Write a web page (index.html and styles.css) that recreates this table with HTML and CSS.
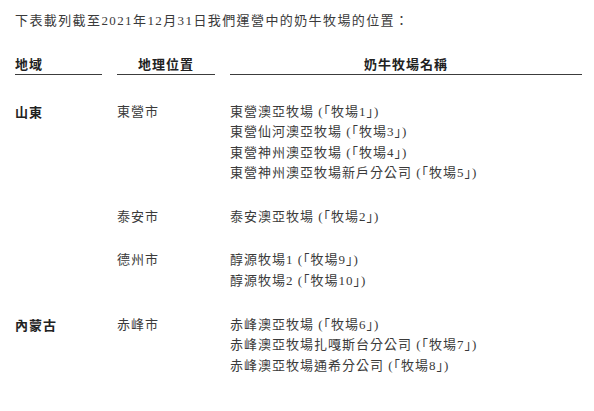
FILE: index.html
```html
<!DOCTYPE html>
<html lang="zh-Hant">
<head>
<meta charset="utf-8">
<link rel="stylesheet" href="styles.css">
</head>
<body>
<p class="intro">下表載列截至2021年12月31日我們運營中的奶牛牧場的位置：</p>
<div class="table">
  <div class="th th-left">地域</div>
  <div class="th th-center">地理位置</div>
  <div class="th th-center">奶牛牧場名稱</div>

  <div class="region">山東</div>
  <div class="city">東營市</div>
  <div class="farms">
    <div>東營澳亞牧場 (「牧場1」)</div>
    <div>東營仙河澳亞牧場 (「牧場3」)</div>
    <div>東營神州澳亞牧場 (「牧場4」)</div>
    <div>東營神州澳亞牧場新戶分公司 (「牧場5」)</div>
  </div>

  <div class="region"></div>
  <div class="city">泰安市</div>
  <div class="farms">
    <div>泰安澳亞牧場 (「牧場2」)</div>
  </div>

  <div class="region"></div>
  <div class="city">德州市</div>
  <div class="farms">
    <div>醇源牧場1 (「牧場9」)</div>
    <div>醇源牧場2 (「牧場10」)</div>
  </div>

  <div class="region">內蒙古</div>
  <div class="city">赤峰市</div>
  <div class="farms">
    <div>赤峰澳亞牧場 (「牧場6」)</div>
    <div>赤峰澳亞牧場扎嘎斯台分公司 (「牧場7」)</div>
    <div>赤峰澳亞牧場通希分公司 (「牧場8」)</div>
  </div>
</div>
</body>
</html>
```
FILE: styles.css
```css
html, body {
  margin: 0;
  background: #ffffff;
}
body {
  padding: 10px 12px 0 15px;
  font-family: "Liberation Serif", "Noto Sans CJK TC", serif;
  font-size: 13px;
  letter-spacing: 1px;
  color: #3a3a3a;
}
.intro {
  margin: 0;
  line-height: 21px;
  letter-spacing: 1.4px;
}
.table {
  display: grid;
  grid-template-columns: 87px 98px 1fr;
  column-gap: 15px;
  row-gap: 23px;
  margin-top: 23px;
}
.th {
  font-family: "Noto Sans CJK TC", sans-serif;
  font-weight: 700;
  color: #222222;
  line-height: 20px;
  border-bottom: 1px solid #3c3c3c;
  margin-bottom: 3.5px;
}
.th-left {
  text-align: left;
}
.th-center {
  text-align: center;
}
.region {
  font-family: "Noto Sans CJK TC", sans-serif;
  font-weight: 700;
  color: #222222;
  line-height: 20.6px;
}
.city, .farms {
  line-height: 20.6px;
}
```
